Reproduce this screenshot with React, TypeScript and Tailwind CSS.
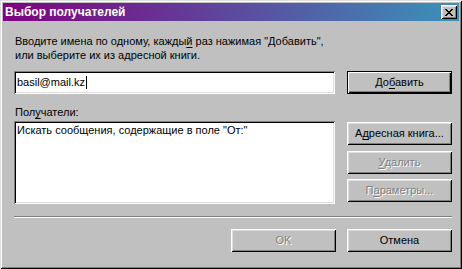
import React from 'react'

const raised =
  'shadow-[inset_1px_1px_#fff,inset_-1px_-1px_#000,inset_2px_2px_#dfdfdf,inset_-2px_-2px_#808080]'
const sunken =
  'shadow-[inset_1px_1px_#808080,inset_-1px_-1px_#fff,inset_2px_2px_#000,inset_-2px_-2px_#dfdfdf]'

function Btn({
  children,
  disabled,
  isDefault,
  className = '',
}: {
  children: React.ReactNode
  disabled?: boolean
  isDefault?: boolean
  className?: string
}) {
  const look = isDefault
    ? 'border border-black shadow-[inset_1px_1px_#fff,inset_-1px_-1px_#000,inset_-2px_-2px_#808080]'
    : raised
  return (
    <div
      className={`w-[105px] h-[23px] bg-[#c0c0c0] flex items-center justify-center ${look} ${
        disabled ? 'text-[#808080] [text-shadow:1px_1px_0_#fff]' : 'text-black'
      } ${className}`}
    >
      {children}
    </div>
  )
}

// mnemonic letter
function U({ children }: { children: React.ReactNode }) {
  return <span className="underline underline-offset-[2px] decoration-1">{children}</span>
}

function CloseGlyph() {
  const rows = ['11000011', '01100110', '00111100', '00011000', '00111100', '01100110', '11000011']
  return (
    <svg width="8" height="7" viewBox="0 0 8 7" shapeRendering="crispEdges">
      {rows.map((r, y) =>
        r.split('').map((c, x) => (c === '1' ? <rect key={`${x}-${y}`} x={x} y={y} width="1" height="1" fill="#000" /> : null))
      )}
    </svg>
  )
}

export default function App() {
  return (
    <div
      className="w-[462px] h-[269px] bg-[#c0c0c0] p-[3px] flex flex-col text-[11px] leading-[13px] text-black font-['Liberation_Sans',Arial,sans-serif] shadow-[inset_1px_1px_#dfdfdf,inset_-1px_-1px_#000,inset_2px_2px_#fff,inset_-2px_-2px_#808080]"
    >
      {/* Title bar */}
      <div className="h-[18px] flex items-center justify-between pl-[2px] pr-[2px] bg-[linear-gradient(to_right,#800080,#3a92ba)]">
        <span className="text-white font-bold text-[12px]">Выбор получателей</span>
        <div className={`w-[16px] h-[14px] bg-[#c0c0c0] flex items-center justify-center ${raised}`}>
          <CloseGlyph />
        </div>
      </div>

      {/* Body */}
      <div className="flex-1 flex flex-col pl-[11px] pr-[7px]">
        <p className="mt-[13px] pl-[1px] leading-[14px]">
          Вводите имена по одному, кажды<U>й</U> раз нажимая "Добавить",
          <br />
          или выберите их из адресной книги.
        </p>

        <div className="mt-[9px] flex gap-[12px]">
          <div className={`w-[321px] h-[23px] bg-white flex items-center pl-[3px] ${sunken}`}>
            <span>basil@mail.kz</span>
            <span className="w-px h-[13px] bg-black ml-px" />
          </div>
          <Btn isDefault>
            <span>
              До<U>б</U>авить
            </span>
          </Btn>
        </div>

        <p className="mt-[12px] pl-[1px]">
          Пол<U>у</U>чатели:
        </p>

        <div className="mt-[2px] flex gap-[12px]">
          <div className={`w-[321px] h-[83px] bg-white pl-[3px] pt-[3px] ${sunken}`}>
            Искать сообщения, содержащие в поле "От:"
          </div>
          <div className="flex flex-col">
            <Btn className="mt-px">
              <span>
                А<U>д</U>ресная книга...
              </span>
            </Btn>
            <Btn disabled className="mt-[6px]">
              <span>
                <U>У</U>далить
              </span>
            </Btn>
            <Btn disabled className="mt-[5px]">
              <span>
                П<U>а</U>раметры...
              </span>
            </Btn>
          </div>
        </div>

        <div className="mt-[12px] h-[2px] border-t border-[#808080] border-b border-b-white" />

        <div className="mt-[11px] flex justify-end gap-[11px]">
          <Btn disabled>OK</Btn>
          <Btn>Отмена</Btn>
        </div>
      </div>
    </div>
  )
}
